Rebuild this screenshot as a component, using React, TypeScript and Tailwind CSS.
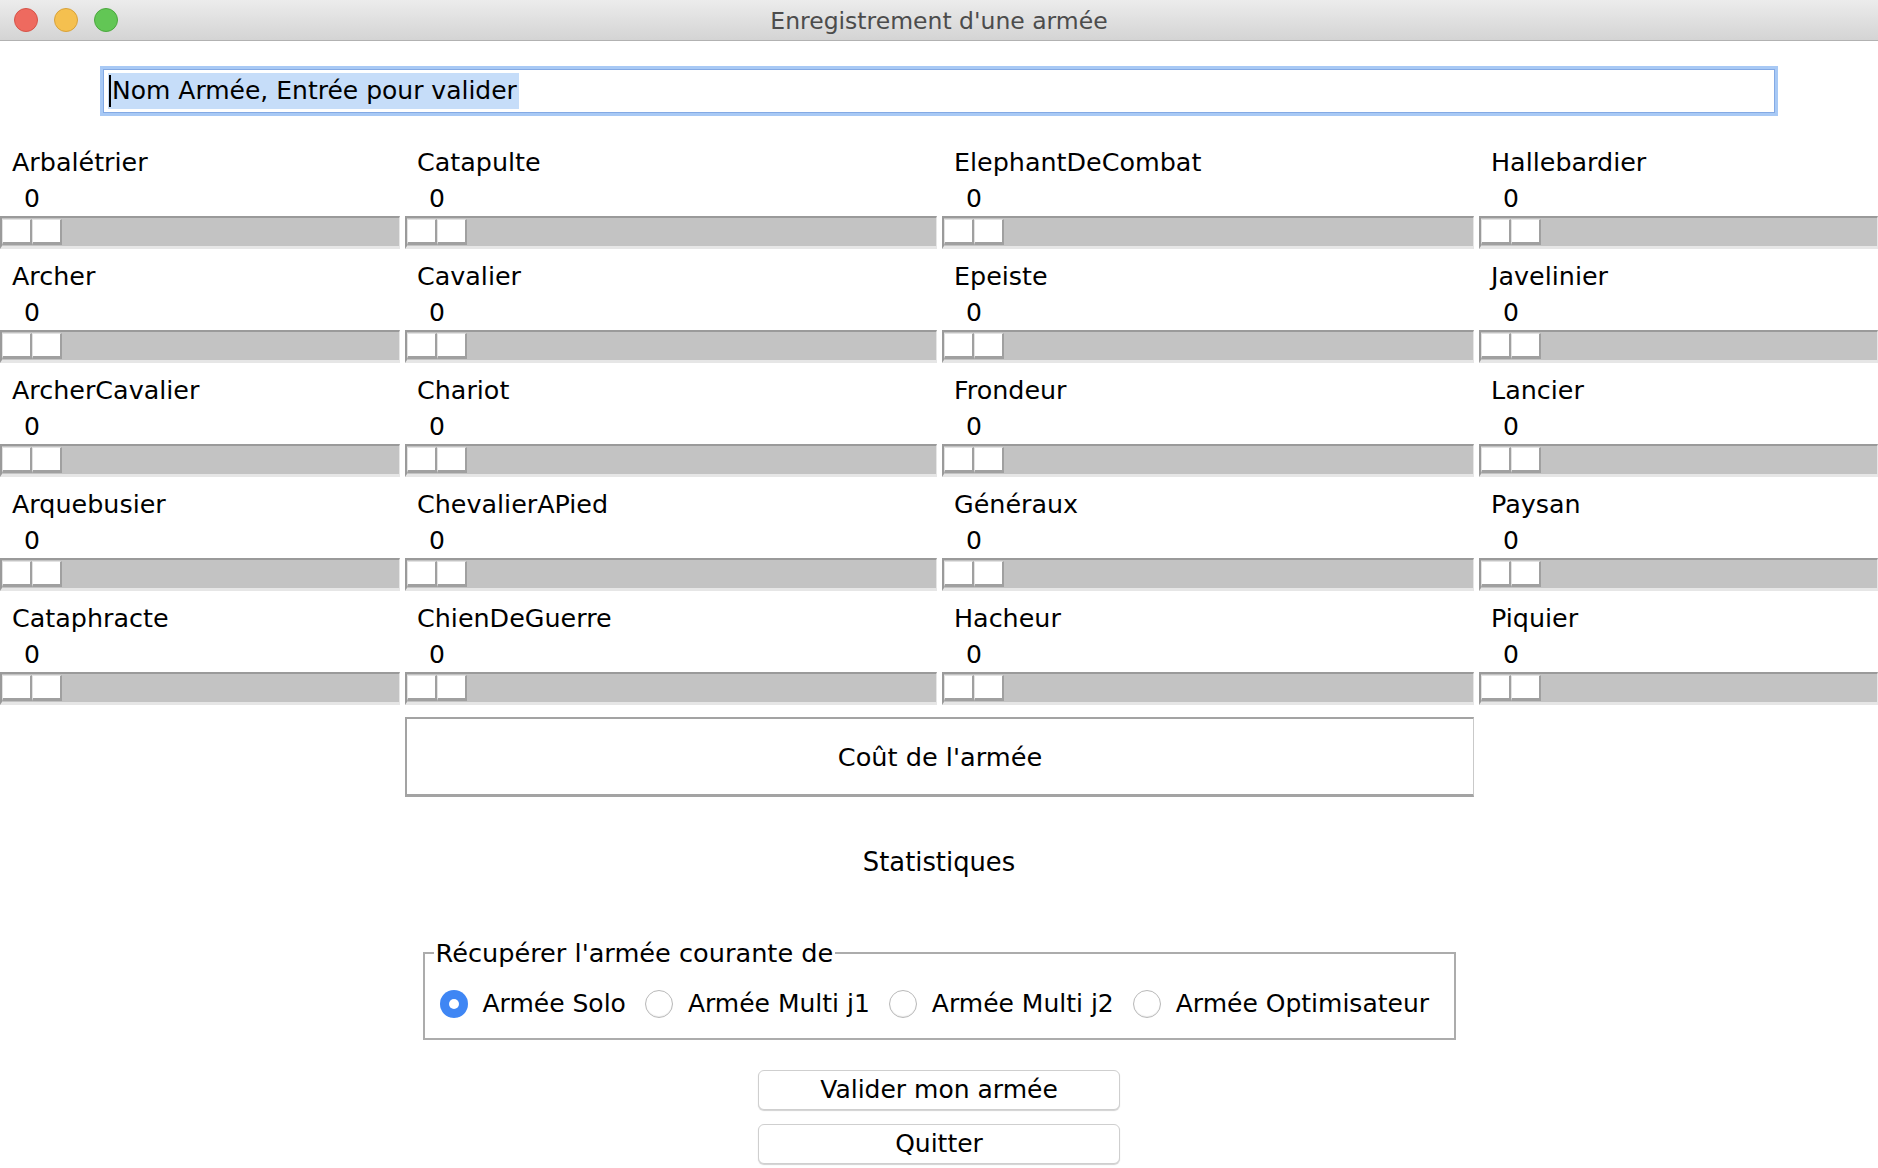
const rows = [
  ['Arbalétrier', 'Catapulte', 'ElephantDeCombat', 'Hallebardier'],
  ['Archer', 'Cavalier', 'Epeiste', 'Javelinier'],
  ['ArcherCavalier', 'Chariot', 'Frondeur', 'Lancier'],
  ['Arquebusier', 'ChevalierAPied', 'Généraux', 'Paysan'],
  ['Cataphracte', 'ChienDeGuerre', 'Hacheur', 'Piquier'],
]

const sources = ['Armée Solo', 'Armée Multi j1', 'Armée Multi j2', 'Armée Optimisateur']

function Scale() {
  return (
    <div className="h-[33px] bg-[#c3c3c3] border-t-2 border-l-2 border-b-[3px] border-r border-[#9a9a9a] border-b-[#e6e6e6] border-r-[#e6e6e6] pt-[1px]">
      <div className="flex h-[26px] w-[60px]">
        <div className="flex-1 bg-white border-t border-l border-[#e2e2e2] border-r-2 border-b-[3px] border-r-[#a0a0a0] border-b-[#a0a0a0]" />
        <div className="flex-1 bg-white border-t border-l border-[#e2e2e2] border-r-2 border-b-[3px] border-r-[#a0a0a0] border-b-[#a0a0a0]" />
      </div>
    </div>
  )
}

function UnitCell({ name }: { name: string }) {
  return (
    <div className="flex flex-col h-[114px]">
      <div className="pl-[12px] leading-[30px] h-[30px] text-[25.4px]">{name}</div>
      <div className="pl-[24px] leading-[30px] h-[30px] mt-[7px]">0</div>
      <div className="mt-[2px]">
        <Scale />
      </div>
    </div>
  )
}

function Radio({ label, checked }: { label: string; checked?: boolean }) {
  return (
    <div className="flex items-center shrink-0 whitespace-nowrap">
      {checked ? (
        <span className="w-[28px] h-[28px] shrink-0 rounded-full bg-[#3f86f4] flex items-center justify-center">
          <span className="w-[10px] h-[10px] rounded-full bg-white" />
        </span>
      ) : (
        <span className="w-[28px] h-[28px] shrink-0 rounded-full bg-white border border-[#b9b9b9] shadow-[inset_0_-1px_1px_rgba(0,0,0,0.08)]" />
      )}
      <span className="ml-[15px] leading-[30px]">{label}</span>
    </div>
  )
}

export default function App() {
  return (
    <div
      className="w-[1878px] h-[1168px] bg-white text-black overflow-hidden flex flex-col text-[25px]"
      style={{ fontFamily: '"DejaVu Sans", Verdana, sans-serif' }}
    >
      {/* title bar */}
      <div className="h-[41px] shrink-0 grid grid-cols-[1fr_auto_1fr] items-center bg-gradient-to-b from-[#ececec] to-[#d4d4d4] border-b border-[#b2b2b2]">
        <div className="flex gap-[16px] pl-[14px]">
          <span className="w-[24px] h-[24px] rounded-full bg-[#ee6a5f] border border-[#d65348]" />
          <span className="w-[24px] h-[24px] rounded-full bg-[#f5c04f] border border-[#d8a23a]" />
          <span className="w-[24px] h-[24px] rounded-full bg-[#62c655] border border-[#4ba83e]" />
        </div>
        <div className="mt-[2px] text-[23.5px] text-[#4c4c4c] leading-[30px]">Enregistrement d'une armée</div>
        <div />
      </div>

      {/* army name */}
      <div className="px-[100px] pt-[25px]">
        <div className="border-[3px] border-[#a8c9f5]">
          <div className="h-[44px] border border-[#84aae4] bg-white flex items-center pl-[4px]">
            <span className="h-[36px] inline-flex items-center bg-[#c6ddf9] pr-[2px]">
              <span className="w-[2px] h-[32px] bg-black ml-[1px]" />
              <span className="ml-[1px] leading-[36px]">Nom Armée, Entrée pour valider</span>
            </span>
          </div>
        </div>
      </div>

      {/* unit sliders */}
      <div className="mt-[31px] grid grid-cols-[400px_532px_532px_1fr] gap-x-[5px]">
        {rows.flat().map((name) => (
          <UnitCell key={name} name={name} />
        ))}
        <div className="col-start-2 col-span-2 h-[80px] bg-white border-t-2 border-l-2 border-b-[3px] border-r border-[#a3a3a3] border-r-[#c9c9c9] flex items-center justify-center">
          <span className="leading-[30px] text-[25.6px]">Coût de l'armée</span>
        </div>
      </div>

      <div className="mt-[50px] text-center leading-[30px] text-[25.8px]">Statistiques</div>

      <fieldset className="mt-[61px] mx-auto w-[1033px] shrink-0 border-2 border-[#acacac] pl-[15px] pr-[6px] pt-[21px] pb-[19px]">
        <legend className="-ml-[6px] px-[2px] leading-[30px] text-[25.6px]">Récupérer l'armée courante de</legend>
        <div className="flex items-center gap-[19px] flex-nowrap">
          {sources.map((s, i) => (
            <Radio key={s} label={s} checked={i === 0} />
          ))}
        </div>
      </fieldset>

      <div className="mt-[30px] flex flex-col items-center gap-[14px]">
        <button className="w-[362px] h-[40px] rounded-[6px] bg-white border border-[#cfcfcf] shadow-[0_1px_1px_rgba(0,0,0,0.18)] leading-[30px]">
          Valider mon armée
        </button>
        <button className="w-[362px] h-[40px] rounded-[6px] bg-white border border-[#cfcfcf] shadow-[0_1px_1px_rgba(0,0,0,0.18)] leading-[30px]">
          Quitter
        </button>
      </div>
    </div>
  )
}
